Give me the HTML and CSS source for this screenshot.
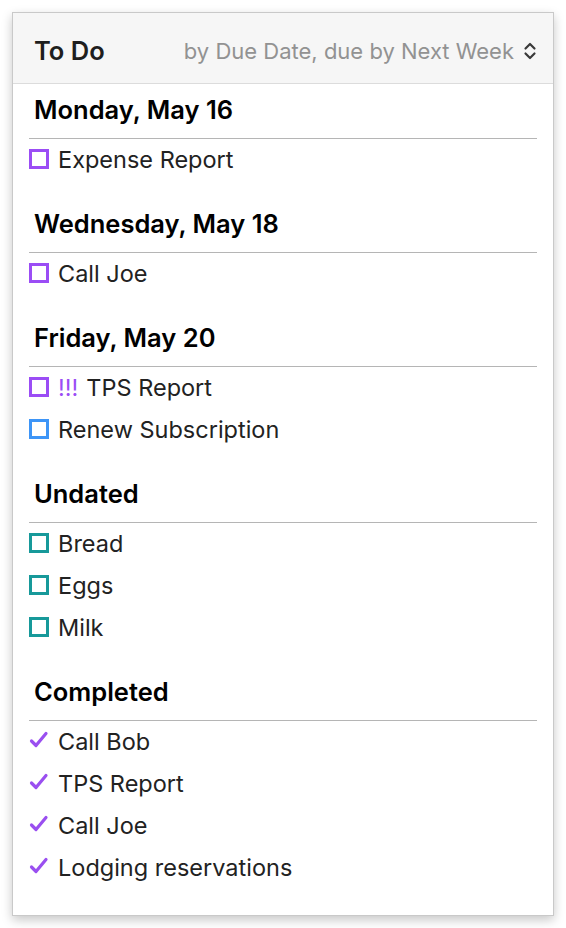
FILE: index.html
```html
<!DOCTYPE html>
<html>
<head>
<meta charset="utf-8">
<link rel="stylesheet" href="styles.css">
</head>
<body>
<div class="panel">
  <div class="header">
    <div class="title">To Do</div>
    <div class="filter">by Due Date, due by Next Week
      <svg class="updown" width="14" height="20" viewBox="0 0 14 20"><path d="M2.5 7.5 L7 3 L11.5 7.5 M2.5 12.5 L7 17 L11.5 12.5" fill="none" stroke="#3a3a3a" stroke-width="2.2" stroke-linecap="round" stroke-linejoin="round"/></svg>
    </div>
  </div>
  <div class="list">
    <div class="section">
      <div class="heading">Monday, May 16</div>
      <div class="item"><span class="box purple"></span>Expense Report</div>
    </div>
    <div class="section">
      <div class="heading">Wednesday, May 18</div>
      <div class="item"><span class="box purple"></span>Call Joe</div>
    </div>
    <div class="section">
      <div class="heading">Friday, May 20</div>
      <div class="item"><span class="box purple"></span><span class="flag">!!!</span>TPS Report</div>
      <div class="item"><span class="box blue"></span>Renew Subscription</div>
    </div>
    <div class="section">
      <div class="heading">Undated</div>
      <div class="item"><span class="box teal"></span>Bread</div>
      <div class="item"><span class="box teal"></span>Eggs</div>
      <div class="item"><span class="box teal"></span>Milk</div>
    </div>
    <div class="section">
      <div class="heading">Completed</div>
      <div class="item"><svg class="check" width="20" height="20" viewBox="0 0 20 20"><path d="M2.5 11 L7 15.5 L17 3.5" fill="none" stroke="#9a4ff0" stroke-width="3.2" stroke-linecap="round" stroke-linejoin="round"/></svg>Call Bob</div>
      <div class="item"><svg class="check" width="20" height="20" viewBox="0 0 20 20"><path d="M2.5 11 L7 15.5 L17 3.5" fill="none" stroke="#9a4ff0" stroke-width="3.2" stroke-linecap="round" stroke-linejoin="round"/></svg>TPS Report</div>
      <div class="item"><svg class="check" width="20" height="20" viewBox="0 0 20 20"><path d="M2.5 11 L7 15.5 L17 3.5" fill="none" stroke="#9a4ff0" stroke-width="3.2" stroke-linecap="round" stroke-linejoin="round"/></svg>Call Joe</div>
      <div class="item"><svg class="check" width="20" height="20" viewBox="0 0 20 20"><path d="M2.5 11 L7 15.5 L17 3.5" fill="none" stroke="#9a4ff0" stroke-width="3.2" stroke-linecap="round" stroke-linejoin="round"/></svg>Lodging reservations</div>
    </div>
  </div>
</div>
</body>
</html>
```

FILE: styles.css
```css
html, body {
  margin: 0;
  padding: 0;
  background: #ffffff;
}
body {
  padding: 12px;
  font-family: "Inter", "Liberation Sans", sans-serif;
}
.panel {
  width: 542px;
  height: 904px;
  box-sizing: border-box;
  border: 1px solid #c9c9c9;
  background: #ffffff;
  box-shadow: 0 4px 10px rgba(0, 0, 0, 0.22);
}
.header {
  height: 71px;
  box-sizing: border-box;
  background: #f6f6f6;
  border-bottom: 1px solid #dcdcdc;
  display: flex;
  align-items: center;
  justify-content: space-between;
  padding: 5px 16px 0 21px;
}
.title {
  font-size: 25.5px;
  font-weight: 600;
  color: #1e1e1e;
}
.filter {
  display: flex;
  align-items: center;
  gap: 9px;
  font-size: 22px;
  color: #929292;
}
.updown {
  display: block;
}
.list {
  padding: 10px 16px 0 16px;
}
.section + .section {
  margin-top: 27px;
}
.heading {
  font-size: 25.5px;
  line-height: 32px;
  font-weight: 600;
  color: #000;
  padding: 0 0 12px 5px;
  border-bottom: 1px solid #b5b5b5;
}
.item {
  height: 42px;
  box-sizing: border-box;
  padding-bottom: 2px;
  display: flex;
  align-items: center;
  font-size: 23.5px;
  color: #222;
}
.box {
  width: 20px;
  height: 20px;
  box-sizing: border-box;
  border: 3px solid;
  margin-right: 9px;
  flex: none;
}
.purple { border-color: #9b4df5; }
.blue { border-color: #3d95f7; }
.teal { border-color: #17999a; }
.flag {
  color: #9b4df5;
  margin-right: 8px;
}
.check {
  display: block;
  margin-right: 9px;
  margin-top: -3px;
  flex: none;
}
```
